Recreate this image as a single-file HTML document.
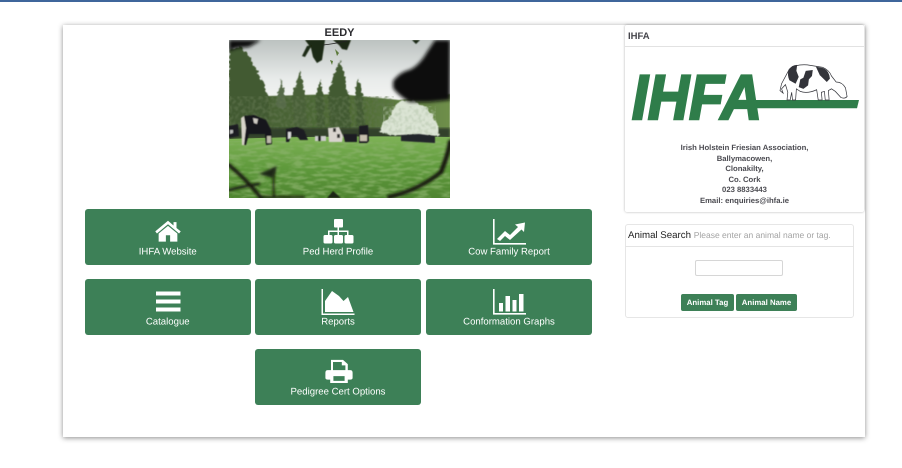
<!DOCTYPE html>
<html><head><meta charset="utf-8"><style>
html,body{margin:0;padding:0;background:#fff}
body{width:902px;height:468px;overflow:hidden;position:relative;font-family:"Liberation Sans",sans-serif;text-rendering:geometricPrecision}
.a{position:absolute}
.b{position:absolute;background:#3d8057;border-radius:3px;width:166px;height:56px;color:#fff;font-size:9.6px;text-align:center}
.b span{position:absolute;left:0;right:0;top:36px;line-height:12px;transform:translateY(1.5px)}
.b svg{position:absolute;left:63px;top:9px}
.l{position:absolute;left:625px;width:239px;text-align:center;font-size:7.7px;font-weight:bold;color:#4a4a50;line-height:11px}
</style></head><body>
<div class="a" style="left:0;top:0;width:902px;height:2px;background:#3f669b"></div>
<div class="a" style="left:63px;top:25px;width:802px;height:412px;background:#fff;box-shadow:0 1px 5px rgba(0,0,0,.45)"></div>
<div class="a" style="left:229px;top:26px;width:221px;text-align:center;font-size:11px;font-weight:bold;color:#2c2c30;line-height:14px">EEDY</div>

<svg class="a" style="left:229px;top:40px" width="221" height="158" viewBox="0 0 221 158">
<defs>
<filter id="f1"><feGaussianBlur stdDeviation="1.8"/></filter>
<filter id="f2"><feGaussianBlur stdDeviation=".45"/></filter>
<filter id="f3"><feGaussianBlur stdDeviation="1.2"/></filter>
<filter id="r" x="-10%" y="-10%" width="120%" height="120%"><feTurbulence type="fractalNoise" baseFrequency=".3" numOctaves="2" seed="4" result="t"/><feDisplacementMap in="SourceGraphic" in2="t" scale="5" xChannelSelector="R" yChannelSelector="G"/><feGaussianBlur stdDeviation=".5"/></filter>
<filter id="n" x="0" y="0" width="100%" height="100%"><feTurbulence type="fractalNoise" baseFrequency=".3" numOctaves="2" seed="3"/><feColorMatrix values="0 0 0 0 .12  0 0 0 0 .18  0 0 0 0 .08  0 0 0 4 -1.700"/><feComposite in2="SourceGraphic" operator="in"/><feGaussianBlur stdDeviation=".6"/></filter>
<filter id="g" x="0" y="0" width="100%" height="100%"><feTurbulence type="fractalNoise" baseFrequency=".08 .35" numOctaves="3" seed="8"/><feColorMatrix values="0 0 0 0 .26  0 0 0 0 .45  0 0 0 0 .15  0 0 0 4 -1.700"/><feComposite in2="SourceGraphic" operator="in"/><feGaussianBlur stdDeviation=".6"/></filter>
<filter id="w" x="0" y="0" width="100%" height="100%"><feTurbulence type="fractalNoise" baseFrequency=".3" numOctaves="2" seed="5"/><feColorMatrix values="0 0 0 0 .45  0 0 0 0 .55  0 0 0 0 .4  0 0 0 4 -1.700"/><feComposite in2="SourceGraphic" operator="in"/><feGaussianBlur stdDeviation=".5"/></filter>
<linearGradient id="sky" x1="0" y1="0" x2="0" y2="1"><stop offset="0" stop-color="#bcc2c0"/><stop offset=".55" stop-color="#e8ebea"/><stop offset="1" stop-color="#f8f8f6"/></linearGradient>
<linearGradient id="gr" x1="0" y1="0" x2="0" y2="1"><stop offset="0" stop-color="#7fb257"/><stop offset=".5" stop-color="#5f9a3c"/><stop offset="1" stop-color="#4e8430"/></linearGradient>
<linearGradient id="fo" x1="0" y1="0" x2="1" y2="0"><stop offset="0" stop-color="#465e33"/><stop offset=".6" stop-color="#506c37"/><stop offset="1" stop-color="#6f8f4b"/></linearGradient>
</defs>
<rect width="221" height="70" fill="url(#sky)"/>
<path d="M40 56L110 54L170 60L221 54V100H0V56Z" fill="url(#fo)" filter="url(#f2)"/>
<g fill="#435a33" filter="url(#r)">
<path d="M0 9L12 6L19 14L25 26L33 40L40 58V92H0Z"/>
<path d="M52 38L49 54L46 68H58L55 52Z" fill="#566b48"/>
<path d="M71 31L67 44L63 58L65 88H78L76 56L74 42Z" fill="#4a6039"/>
<path d="M91 40L86 58L88 88H96L95 58Z"/>
<path d="M111 21L104 38L99 54L101 88H122L120 56L116 38Z"/>
<path d="M129 38L126 54L128 86H136L133 54Z"/>
</g>
<rect x="0" y="56" width="165" height="38" filter="url(#n)" opacity=".6"/>
<rect y="88" width="221" height="10" fill="#333f2a" filter="url(#f3)"/>
<path d="M0 99Q110 95 221 97V158H0Z" fill="url(#gr)"/>
<rect y="101" width="221" height="57" filter="url(#g)" opacity=".7"/>
<!-- bush -->
<path d="M150 92Q153 82 160 78Q164 66 172 61Q184 58 190 64Q200 68 205 78Q211 86 209 96H170Z" fill="#dbe4d4" filter="url(#r)"/>
<path d="M154 66H207V95H154Z" filter="url(#w)" opacity=".5"/>
<!-- cows -->
<g filter="url(#f2)">
<path d="M14 76L25 75L37 80L42 90L43 104L37 105L36 94H20L17 105H13Z" fill="#17161c"/>
<path d="M12 78L15 76L17 88L16 96L15 105H13Z" fill="#d8d4ca"/>
<path d="M24 78L29 79L28 84L25 83Z" fill="#cfcbc4"/>
<rect x="38" y="96" width="4" height="7" fill="#bdb8aa"/>
<path d="M0 86L9 84L10 96L0 98Z" fill="#1e1d24"/><path d="M1 90l3 0 0 3-3 1z" fill="#bbb"/>
<path d="M57 89L68 87L75 90L79 100H71L68 96H62L60 102H57Z" fill="#1d1c22"/><path d="M59 92l3 0 0 6-3 1z" fill="#d8d8d8"/>
<path d="M99 88L110 87L114 96L113 102H100Z" fill="#d8d3ce"/><path d="M104 88l3 0 0 4-3 0zM108 94l3 0 0 4-3 0z" fill="#333"/>
<path d="M114 94L128 94V102H116Z" fill="#1d1c22"/>
<path d="M130 86L139 85L140 101L138 103H130Z" fill="#1e1d24"/><rect x="131" y="95" width="7" height="6" fill="#c6bfae"/>
<path d="M86 96H97V101H86Z" fill="#ccc"/><path d="M89 96h3v5h-3z" fill="#222"/>
<path d="M172 95L190 94L206 96V103L172 101Z" fill="#24252a"/>
</g>
<!-- dark foliage -->
<g fill="#0c0e0a" filter="url(#f1)">
<path d="M164 41Q171 32 180 30Q190 26 198 12L206 0H221V60L200 62L180 62Q168 54 164 48Z"/>
<path d="M0 0H32L20 7L8 8L0 11Z"/>
</g>
<g fill="#1d2912" filter="url(#f2)">
<path d="M76 0H96L93 20L88 23L84 17L82 8Z"/><path d="M78 6L83 5L76 17L73 16Z"/><path d="M104 0H122L118 10L113 9L110 5Z"/><path d="M183 0H191L187 4Z"/>
</g>
<path d="M106 9L110 13L108 16Z" fill="#5d7b3c"/><path d="M101 20l3 1-1 4z" fill="#5d7b3c"/>
<path d="M94 5Q104 4 118 1" fill="none" stroke="#222" stroke-width=".7"/>
<g fill="none" stroke="#15190f" stroke-linecap="round" filter="url(#f3)">
<path d="M0 125Q18 140 32 158" stroke-width="3.500"/>
<path d="M32 157H75" stroke-width="2"/>
<path d="M45 130Q44 146 45 156" stroke-width="1.800"/>
<path d="M30 144Q15 146 0 150" stroke-width="2.500"/>
<path d="M160 157Q190 150 212 132" stroke-width="4"/>
<path d="M212 132Q220 112 221 102" stroke-width="4.500"/>
</g>
<path d="M30 134L48 126L44 138Z" fill="#1c2814" filter="url(#f3)"/>
<path d="M98 158L104 151L112 158Z" fill="#1c2814" filter="url(#f2)"/>
</svg>

<!-- buttons -->
<div class="b" style="left:85px;top:209px;width:165.500px"><svg style="left:66px;top:10px" width="34" height="24" viewBox="0 0 40 28"><path fill="#fff" d="M20 2L5 14.500L7 17L20 6L33 17L35 14.500L30 10.500V3.500H26.500V7.500Z"/><path fill="#fff" d="M20 8L9 17V26.500H17.500V19H22.500V26.500H31V17Z"/></svg><span>IHFA Website</span></div>
<div class="b" style="left:255px;top:209px"><svg style="left:63px;top:10px" width="40" height="28" viewBox="0 0 40 28"><g fill="#fff"><rect x="16" y="0" width="9" height="8.500" rx="1"/><rect x="5.500" y="16" width="9" height="8.500" rx="1.500"/><rect x="16" y="16" width="9" height="8.500" rx="1.500"/><rect x="26.500" y="16" width="9" height="8.500" rx="1.500"/><path d="M19.500 8h1.500v3.500h9.500V16h-1.500v-3H21v3h-1.500v-3H11.500v3H10v-4.500h9.500Z"/></g></svg><span>Ped Herd Profile</span></div>
<div class="b" style="left:426px;top:209px"><svg style="left:63px;top:9px" width="40" height="28" viewBox="0 0 40 28"><path fill="#fff" d="M4 1h1.600V25H37v1.600H4Z"/><path fill="#fff" d="M8 21L16 13L21 17L29 9L26 6.500L36 4.500L35 14L32.500 11.500L21 22L16 18L11 23Z"/></svg><span>Cow Family Report</span></div>
<div class="b" style="left:85px;top:279px;width:165.500px"><svg width="40" height="28" viewBox="0 0 40 28"><g fill="#fff"><rect x="8" y="3.500" width="24.500" height="4"/><rect x="8" y="11.500" width="24.500" height="4"/><rect x="8" y="19.500" width="24.500" height="4"/></g></svg><span>Catalogue</span></div>
<div class="b" style="left:255px;top:279px"><svg width="40" height="28" viewBox="0 0 40 28"><path fill="#fff" d="M3.500 1H5V25.500H36.500V27H3.500Z"/><path fill="#fff" d="M7 24V13L14 3L21 8L25.500 13L30 9L35.500 24Z"/></svg><span>Reports</span></div>
<div class="b" style="left:426px;top:279px"><svg width="40" height="28" viewBox="0 0 40 28"><path fill="#fff" d="M4 1h1.600V25H37v1.600H4Z"/><g fill="#fff"><rect x="10" y="15" width="4" height="8.500"/><rect x="16.500" y="8" width="4.500" height="15.500"/><rect x="23.500" y="12" width="4" height="11.500"/><rect x="30" y="6" width="4.500" height="17.500"/></g></svg><span>Conformation Graphs</span></div>
<div class="b" style="left:255px;top:349px"><svg style="left:67.600px;top:10px" width="32" height="24" viewBox="0 0 40 28" preserveAspectRatio="none"><path fill="#fff" fill-rule="evenodd" d="M10 1H25L31 6V13H34Q37 13 37 16V22Q37 24 34 24H31V28H9V24H6Q3 24 3 22V16Q3 13 6 13H10ZM12.500 3.500V13H28V7.500H23.500V3.500ZM13 20V25.500H27V20Z"/></svg><span>Pedigree Cert Options</span></div>

<!-- IHFA card -->
<div class="a" style="left:625px;top:25px;width:239px;height:187px;background:#fff;border-radius:2px;box-shadow:0 0 2.500px rgba(0,0,0,.3)"></div>
<div class="a" style="left:625px;top:46px;width:239px;height:1px;background:#e2e2e2"></div>
<div class="a" style="left:628px;top:31px;font-size:9.500px;font-weight:bold;color:#45454b;line-height:12px">IHFA</div>

<svg class="a" style="left:625px;top:55px" width="240" height="75" viewBox="0 0 240 75">
<path fill="#2f7d4a" d="M127 45H234L232 53.300H127Z"/>
<text x="7" y="63.800" font-family="Liberation Sans" font-weight="bold" font-style="italic" font-size="63" textLength="130" lengthAdjust="spacingAndGlyphs" fill="#2f7d4a" stroke="#2f7d4a" stroke-width="2.500">IHFA</text>
<g transform="translate(155,9) scale(.78,.857) translate(-150,-3)">
<path fill="#fff" stroke="#33343a" stroke-width=".9" d="M162 9Q170 3 185 4L205 7Q213 10 216 17L222 24Q230 24 234 31L236 41Q233 44 228 42L221 35L216 32L212 34L213 45H208L207 35L203 36L204 45H199L197 33Q185 38 176 35L171 32L170 45H166L165 36L163 45H159L160 36L157 27L152 32L154 37L150 34L152 26Z"/>
<g fill="#33343a"><path d="M161 10Q165 4 172 4L171 11L174 18L170 26L162 22Q159 16 161 10Z"/><path d="M196 6L206 8Q213 11 214 20L210 24L201 16Z"/><path d="M183 11L192 10L191 17L187 21L186 28L180 32L174 30L176 21L180 19Z"/></g>
</g>
</svg>

<div class="l" style="top:142px">Irish Holstein Friesian Association,</div>
<div class="l" style="top:152.500px">Ballymacowen,</div>
<div class="l" style="top:163px">Clonakilty,</div>
<div class="l" style="top:173.500px">Co. Cork</div>
<div class="l" style="top:184px">023 8833443</div>
<div class="l" style="top:194.500px">Email: enquiries@ihfa.ie</div>

<!-- search -->
<div class="a" style="left:625px;top:224px;width:227px;height:92px;border:1px solid #e6e6e6;border-radius:3px"></div>
<div class="a" style="left:625px;top:246px;width:229px;height:1px;background:#e4e4e4"></div>
<div class="a" style="left:628px;top:229px;font-size:9.700px;color:#222;line-height:13px;white-space:nowrap">Animal Search <span style="font-size:8.500px;color:#a3a3a3">Please enter an animal name or tag.</span></div>
<div class="a" style="left:695px;top:260px;width:88px;height:16px;box-sizing:border-box;border:1px solid #d6d6d6;border-radius:2px;background:#fff"></div>
<div class="a" style="left:681px;top:293.500px;width:53px;height:17px;background:#3d8057;border-radius:2px;color:#fff;font-size:7.800px;font-weight:bold;text-align:center;line-height:17px">Animal Tag</div>
<div class="a" style="left:736px;top:293.500px;width:61px;height:17px;background:#3d8057;border-radius:2px;color:#fff;font-size:7.800px;font-weight:bold;text-align:center;line-height:17px">Animal Name</div>
</body></html>
